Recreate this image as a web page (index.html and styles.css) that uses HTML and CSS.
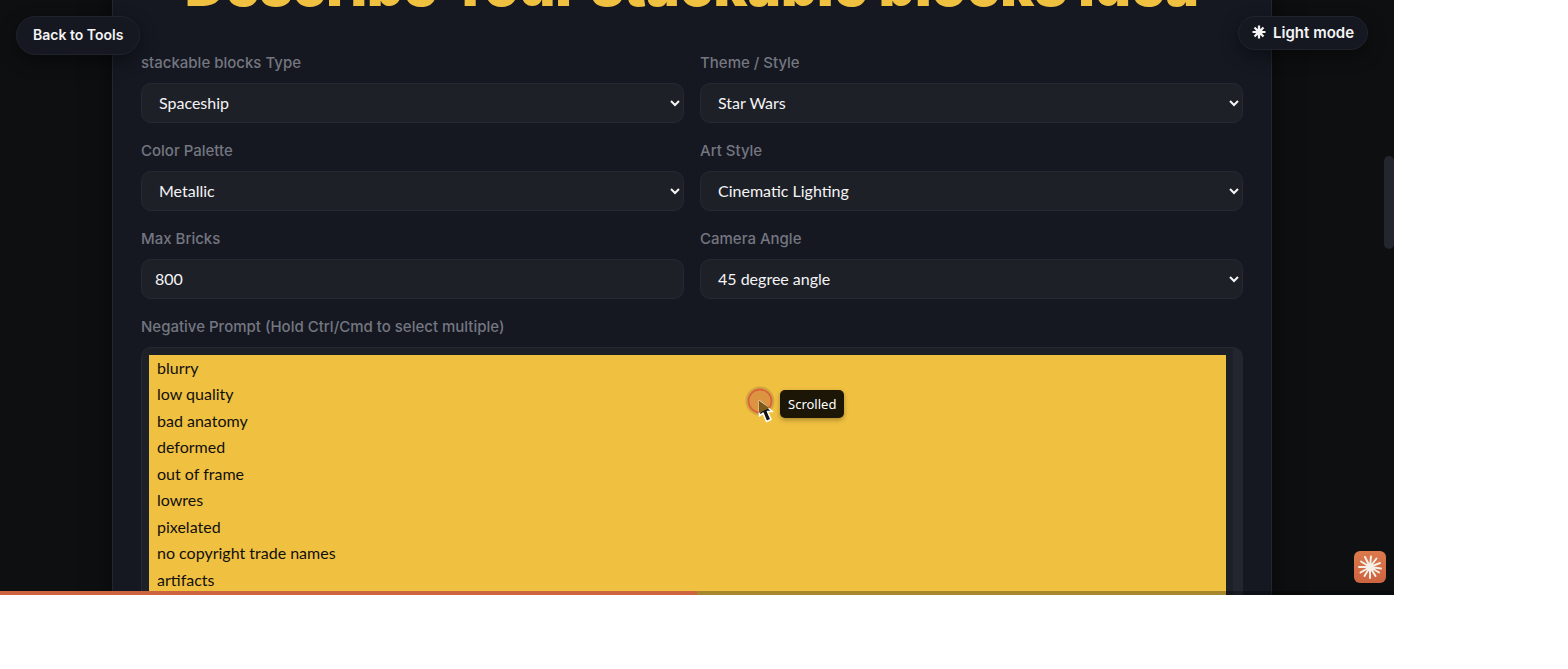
FILE: index.html
```html
<!DOCTYPE html>
<html lang="en">
<head>
  <meta charset="UTF-8" />
  <meta name="viewport" content="width=device-width, initial-scale=1.0">
  <title>Stackable Blocks Prompt Tool</title>
  <link rel="stylesheet" href="styles.css">
</head>
<body>
  <div class="screen">
    <main class="page">
      <form class="card">
        <h1>Describe Your stackable blocks idea</h1>

        <div class="form-grid">
          <div class="field">
            <label for="blockType">stackable blocks Type</label>
            <select id="blockType">
              <option>Spaceship</option>
            </select>
          </div>
          <div class="field">
            <label for="theme">Theme / Style</label>
            <select id="theme">
              <option>Star Wars</option>
            </select>
          </div>
          <div class="field">
            <label for="palette">Color Palette</label>
            <select id="palette">
              <option>Metallic</option>
            </select>
          </div>
          <div class="field">
            <label for="artStyle">Art Style</label>
            <select id="artStyle">
              <option>Cinematic Lighting</option>
            </select>
          </div>
          <div class="field">
            <label for="maxBricks">Max Bricks</label>
            <input type="text" inputmode="numeric" id="maxBricks" value="800">
          </div>
          <div class="field">
            <label for="camera">Camera Angle</label>
            <select id="camera">
              <option>45 degree angle</option>
            </select>
          </div>
          <div class="field field-wide">
            <label for="negative">Negative Prompt (Hold Ctrl/Cmd to select multiple)</label>
            <select id="negative" class="multi" multiple size="9">
              <option selected>blurry</option>
              <option selected>low quality</option>
              <option selected>bad anatomy</option>
              <option selected>deformed</option>
              <option selected>out of frame</option>
              <option selected>lowres</option>
              <option selected>pixelated</option>
              <option selected>no copyright trade names</option>
              <option selected>artifacts</option>
            </select>
          </div>
        </div>
      </form>
    </main>

    <!-- Floating buttons -->
    <a href="#" class="pill back-link">Back to Tools</a>
    <button type="button" class="pill mode-button">
      <svg width="14" height="14" viewBox="0 0 14 14" aria-hidden="true">
        <path d="M7 0.5V13.5M0.5 7H13.5M2.5 2.5L11.5 11.5M11.5 2.5L2.5 11.5" stroke="currentColor" stroke-width="2.2" />
        <circle cx="7" cy="7" r="3.5" fill="currentColor" />
      </svg>
      Light mode
    </button>

    <div class="scroll-thumb"></div>

    <!-- Pointer and action label -->
    <div class="pointer">
      <svg width="30" height="38" viewBox="0 0 30 38" aria-hidden="true">
        <circle cx="15" cy="15" r="14.5" fill="#b98a3c" fill-opacity="0.5" />
        <circle cx="15" cy="15" r="11.5" fill="#dc9440" stroke="#d9623c" stroke-width="1.8" />
        <path d="M14.5 15V30L18 27L21.5 35.5L26 33.5L22.5 25.5H27.5Z" fill="#111" stroke="#fff" stroke-width="1.6" stroke-linejoin="round" />
        <path d="M14 14.5V27L24.5 22Z" fill="#7c5a1c" />
      </svg>
      <span class="pointer-label">Scrolled</span>
    </div>

    <div class="badge">
      <svg width="26" height="26" viewBox="0 0 26 26" aria-hidden="true">
        <g stroke="#f6efe6" stroke-width="2" stroke-linecap="round">
          <path d="M13 13L14 2.5M13 13L19.5 4.5M13 13L23 9M13 13L24 14.5M13 13L22 18.5M13 13L18.5 22M13 13L13 24M13 13L7.5 22M13 13L3.5 18.5M13 13L2 13M13 13L4 7.5M13 13L8 3" />
        </g>
        <circle cx="13" cy="13" r="3.5" fill="#f6efe6" />
      </svg>
    </div>

    <div class="progress">
      <div class="progress-bar" style="width: 50%"></div>
    </div>
  </div>
</body>
</html>
```
FILE: styles.css
```css
* {
  box-sizing: border-box;
}

body {
  margin: 0;
  padding: 0 174px 74px 0;
  height: 100vh;
  background: #fff;
  font-family: Lato, "Open Sans", sans-serif;
  overflow: hidden;
}

.screen {
  position: relative;
  height: 100%;
  overflow: hidden;
  background: #0e0f10;
  color: #f4f4f5;
}

.page {
  padding: 0 122px 0 112px;
}

.card {
  max-width: 1160px;
  margin: -48px auto 0;
  padding: 0 28px 28px;
  background: #151821;
  border: 1px solid #23262f;
  box-shadow: 0 0 24px rgba(0, 0, 0, 0.5);
}

h1 {
  margin: 0 0 34px;
  font-family: Inter, sans-serif;
  font-size: 56px;
  font-weight: 900;
  line-height: 66px;
  text-align: center;
  white-space: nowrap;
  color: #f0c040;
}

.form-grid {
  display: grid;
  grid-template-columns: 1fr 1fr;
  gap: 18px 16px;
}

.field {
  display: flex;
  flex-direction: column;
  gap: 10px;
  min-width: 0;
}

.field-wide {
  grid-column: 1 / -1;
}

label {
  font-family: Inter, sans-serif;
  font-size: 15px;
  font-weight: 500;
  line-height: 20px;
  color: #747680;
}

select,
input {
  width: 100%;
  height: 40px;
  padding: 0 13px 2px;
  background-color: #1e2028;
  border: 1px solid #262932;
  border-radius: 10px;
  font-family: inherit;
  font-size: 16px;
  color: #f4f4f5;
}

.multi {
  height: 320px;
  padding: 7px 7px 7px 7px;
  border-right: 10px solid #24262f;
  overflow: hidden;
}

.multi option {
  height: 26px;
  padding: 3px 8px 0;
  background: linear-gradient(#f0c040, #f0c040);
}

.multi option:nth-child(even) {
  height: 27px;
}

/* last row fills the rest of the list */
.multi option:last-child {
  height: 90px;
}

.pill {
  position: absolute;
  top: 16px;
  display: flex;
  align-items: center;
  background: #161821;
  border: 1px solid #20232c;
  border-radius: 20px;
  box-shadow: 0 6px 18px rgba(0, 0, 0, 0.4);
  font-family: Inter, sans-serif;
  font-size: 14px;
  font-weight: 600;
  color: #f4f4f5;
  text-decoration: none;
}

.back-link {
  left: 16px;
  height: 39px;
  padding: 0 16px 2px;
}

.mode-button {
  right: 26px;
  height: 34px;
  padding: 0 13px 2px;
  gap: 7px;
  font-size: 15px;
}

.scroll-thumb {
  position: absolute;
  top: 156px;
  right: 0;
  width: 10px;
  height: 93px;
  background: #24262f;
  border-radius: 5px;
}

.pointer {
  position: absolute;
  top: 386px;
  left: 745px;
  display: flex;
  align-items: flex-start;
  gap: 5px;
}

.pointer-label {
  margin-top: 4px;
  padding: 0 8px;
  background: #1b1606;
  border-radius: 5px;
  box-shadow: 0 2px 5px rgba(0, 0, 0, 0.3);
  font-family: "Noto Sans", sans-serif;
  font-size: 13px;
  line-height: 28px;
  color: #fff;
}

.badge {
  position: absolute;
  right: 8px;
  bottom: 12px;
  display: flex;
  align-items: center;
  justify-content: center;
  width: 32px;
  height: 32px;
  background: linear-gradient(#dc7a4c, #cc6440);
  border-radius: 6px;
}

.progress {
  position: absolute;
  right: 0;
  bottom: 0;
  left: 0;
  height: 4px;
  background: rgba(0, 0, 0, 0.3);
}

.progress-bar {
  height: 100%;
  background: #cc6440;
}
```
